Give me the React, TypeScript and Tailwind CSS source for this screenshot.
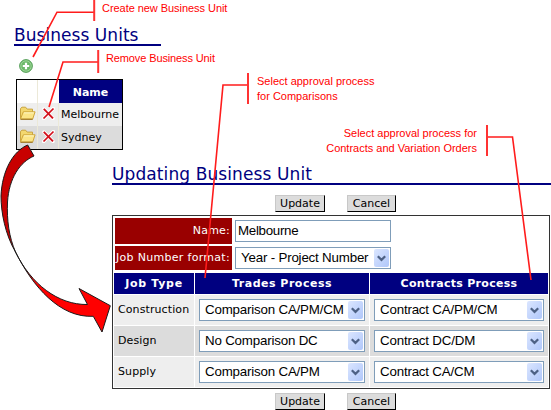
import React from "react";

const sans = "font-['DejaVu_Sans',Verdana,sans-serif]";
const arial = "font-['Liberation_Sans',Arial,sans-serif]";

function Folder() {
  return (
    <svg width="17" height="15" viewBox="0 0 17 15">
      <path d="M1.5 12.5V2.5L3 1.2h3.6l1.6 1.9h5.3v3" fill="#f3d870" stroke="#c9a440" strokeWidth="1" />
      <path d="M1.5 13 4.3 5.8h11.8l-2.4 7.2z" fill="#fbe588" stroke="#cfa63a" strokeWidth="1" />
      <path d="M5 6.9h9.8" stroke="#fff8c8" strokeWidth="1" />
      <path d="M1.5 13.3h12.2" stroke="#98701f" strokeWidth="1" />
    </svg>
  );
}

function Cross() {
  return (
    <svg width="13" height="13" viewBox="0 0 13 13">
      <path d="M2 2 11 11.5M11.3 1.5 1.7 11.5" stroke="#fff" strokeWidth="3.4" strokeLinecap="round" />
      <path d="M1.8 1.8 11 11.3" stroke="#d3101c" strokeWidth="1.9" />
      <path d="M11.5 1.5 1.5 11.5" stroke="#d3101c" strokeWidth="1.7" />
    </svg>
  );
}

function AddIcon() {
  return (
    <svg width="14" height="14" viewBox="0 0 14 14" className="block">
      <circle cx="7" cy="7" r="6.4" fill="#6cb96a" stroke="#4f9a52" strokeWidth="0.9" />
      <circle cx="7" cy="7" r="5.2" fill="none" stroke="#a8dca2" strokeWidth="0.8" />
      <path d="M7 3.8v6.4M3.8 7h6.4" stroke="#fff" strokeWidth="2.2" />
    </svg>
  );
}

function Select({ text, className }: { text: string; className: string }) {
  return (
    <div className={`flex h-[22px] items-center justify-between border border-[#7f9db9] bg-white pl-[5px] pr-px ${className}`}>
      <span className={`${arial} text-[13.33px] leading-[20px] tracking-[-0.19px] whitespace-nowrap text-black`}>{text}</span>
      <span className="flex h-[18px] w-[15px] shrink-0 items-center justify-center rounded-[2px] bg-linear-to-br from-[#dbe6ff] to-[#b0c7fa]">
        <svg width="9" height="7" viewBox="0 0 9 7">
          <path d="M0.8 1.2 4.5 4.9 8.2 1.2" fill="none" stroke="#4d6185" strokeWidth="2.2" />
        </svg>
      </span>
    </div>
  );
}

function Buttons() {
  const button =
    "h-[17px] border border-t-[#c8c8c8] border-l-[#c8c8c8] border-r-black border-b-black bg-[#dcdcdc] text-center text-[11px] leading-[15px] text-black";
  return (
    <div className="ml-[163px] flex gap-[22px]">
      <button className={`w-[50px] ${button}`}>Update</button>
      <button className={`w-[49px] ${button}`}>Cancel</button>
    </div>
  );
}

const units = [
  { name: "Melbourne", bg: "bg-[#eeeeee]" },
  { name: "Sydney", bg: "bg-[#dcdcdc]" },
];

const jobs = [
  { type: "Construction", trades: "Comparison CA/PM/CM", contracts: "Contract CA/PM/CM", bg: "bg-[#eeeeee]" },
  { type: "Design", trades: "No Comparison DC", contracts: "Contract DC/DM", bg: "bg-[#dcdcdc]" },
  { type: "Supply", trades: "Comparison CA/PM", contracts: "Contract CA/CM", bg: "bg-[#eeeeee]" },
];

function Callouts() {
  const note = `absolute text-[11px] leading-[15px] whitespace-nowrap text-[#f00] ${arial}`;
  return (
    <>
      <svg className="absolute top-0 left-0" width="551" height="410" viewBox="0 0 551 410">
        <g stroke="#1a1a1a" strokeWidth="1" strokeLinejoin="miter">
          <path
            d="M27.7 145 34 156C20 162 9 178 7.500 202C6.700 220 9 237 15.500 252C5 234 1 212 1 196C2 171 13 151 27.700 145Z"
            fill="#c80000"
          />
          <path
            d="M15.500 252C31 284 58 305 87.500 304.500L79 288.500 110.300 305.700 102 332 93.300 316.300C60 318 33 287 15.500 252Z"
            fill="#f00"
          />
        </g>
        <g fill="none" stroke="#ff1c1c" strokeWidth="1.6">
          <path d="M94 12.200H57L33 57" />
          <path d="M98 62H63L49 107" />
          <path d="M248 85H223L205 278" />
          <path d="M487 137H512.500L531 280" />
        </g>
        <g fill="none" stroke="#ff3232" strokeWidth="2">
          <path d="M94.200 0V21M98.200 50V73M248 73V104M487 125V156" />
        </g>
      </svg>
      <div className={`${note} top-px left-[102px] tracking-[-0.05px]`}>Create new Business Unit</div>
      <div className={`${note} top-[51px] left-[106px] tracking-[-0.12px]`}>Remove Business Unit</div>
      <div className={`${note} top-[74px] left-[257px]`}>
        Select approval process
        <br />
        for Comparisons
      </div>
      <div className={`${note} top-[126px] right-[74px] text-right`}>
        Select approval process for
        <br />
        Contracts and Variation Orders
      </div>
    </>
  );
}

export default function App() {
  return (
    <div className={`relative h-[410px] w-[551px] overflow-hidden bg-white text-black ${sans}`}>
      <section className="pt-[24px] pl-[14px]">
        <h1 className="h-[22px] w-[147px] border-b-2 border-[#000080] text-[17px] leading-[23px] tracking-[0.05px] whitespace-nowrap text-[#000080]">
          Business Units
        </h1>
        <div className="mt-[13px] ml-[5px]">
          <AddIcon />
        </div>
        <div className="mt-[6px] ml-[2px] h-[71px] w-[107px] border border-black bg-white text-[11px]">
          <div className="grid h-[23px] grid-cols-[21px_21px_1fr] grid-rows-[23px]">
            <div className="border-r border-[#ece9d8]" />
            <div />
            <div className="bg-[#000080] text-center leading-[25px] font-bold text-white">Name</div>
          </div>
          {units.map((u) => (
            <div key={u.name} className={`grid h-[23px] grid-cols-[21px_21px_1fr] grid-rows-[23px] ${u.bg}`}>
              <div className="flex items-center justify-center border-r border-[#ece9d8] pb-[3px]">
                <Folder />
              </div>
              <div className="flex items-center justify-center border-r border-[#ece9d8] pb-[2px]">
                <Cross />
              </div>
              <div className="pl-[2px] leading-[24px]">{u.name}</div>
            </div>
          ))}
        </div>
      </section>

      <section className="mt-[14px] ml-[112px]">
        <h2 className="h-[21px] border-b-2 border-[#000080] text-[17px] leading-[20px] tracking-[0.1px] whitespace-nowrap text-[#000080]">
          Updating Business Unit
        </h2>
        <div className="h-[10px]" />
        <Buttons />
        <div className="mt-[3px] h-[174px] w-[438px] border border-[#333] bg-white pt-[2px] pr-px pl-px text-[11px]">
          <div className="ml-px flex h-[26px]">
            <div className="w-[117px] bg-[#990000] pr-[2px] text-right leading-[26px] tracking-[0.2px] text-white">Name:</div>
            <div
              className={`mt-[2px] ml-[3px] h-[22px] w-[156px] border border-[#7f9db9] pl-[2px] text-[13.33px] leading-[20px] tracking-[-0.3px] ${arial}`}
            >
              Melbourne
            </div>
          </div>
          <div className="mt-[2px] ml-px flex h-[24px]">
            <div className="w-[117px] bg-[#990000] pr-[2px] text-right leading-[24px] tracking-[0.3px] whitespace-nowrap text-white">
              Job Number format:
            </div>
            <Select text="Year - Project Number" className="mt-px ml-[3px] w-[156px]" />
          </div>
          <div className="mt-[3px] grid h-[21px] grid-cols-[80px_174px_1fr] gap-px text-center leading-[21px] font-bold text-white">
            <div className="bg-[#000080] tracking-[0.7px]">Job Type</div>
            <div className="bg-[#000080] tracking-[0.5px]">Trades Process</div>
            <div className="bg-[#000080] tracking-[0.3px]">Contracts Process</div>
          </div>
          {jobs.map((j) => (
            <div key={j.type} className="mt-px grid h-[30px] grid-cols-[80px_174px_1fr] gap-px">
              <div className={`${j.bg} pl-[4px] leading-[30px] tracking-[0.1px]`}>{j.type}</div>
              <div className={`${j.bg} pt-[4px] pl-[4px]`}>
                <Select text={j.trades} className="w-[166px]" />
              </div>
              <div className={`${j.bg} pt-[4px] pl-[4px]`}>
                <Select text={j.contracts} className="w-[170px]" />
              </div>
            </div>
          ))}
        </div>
        <div className="h-[4px]" />
        <Buttons />
      </section>
      <Callouts />
    </div>
  );
}
